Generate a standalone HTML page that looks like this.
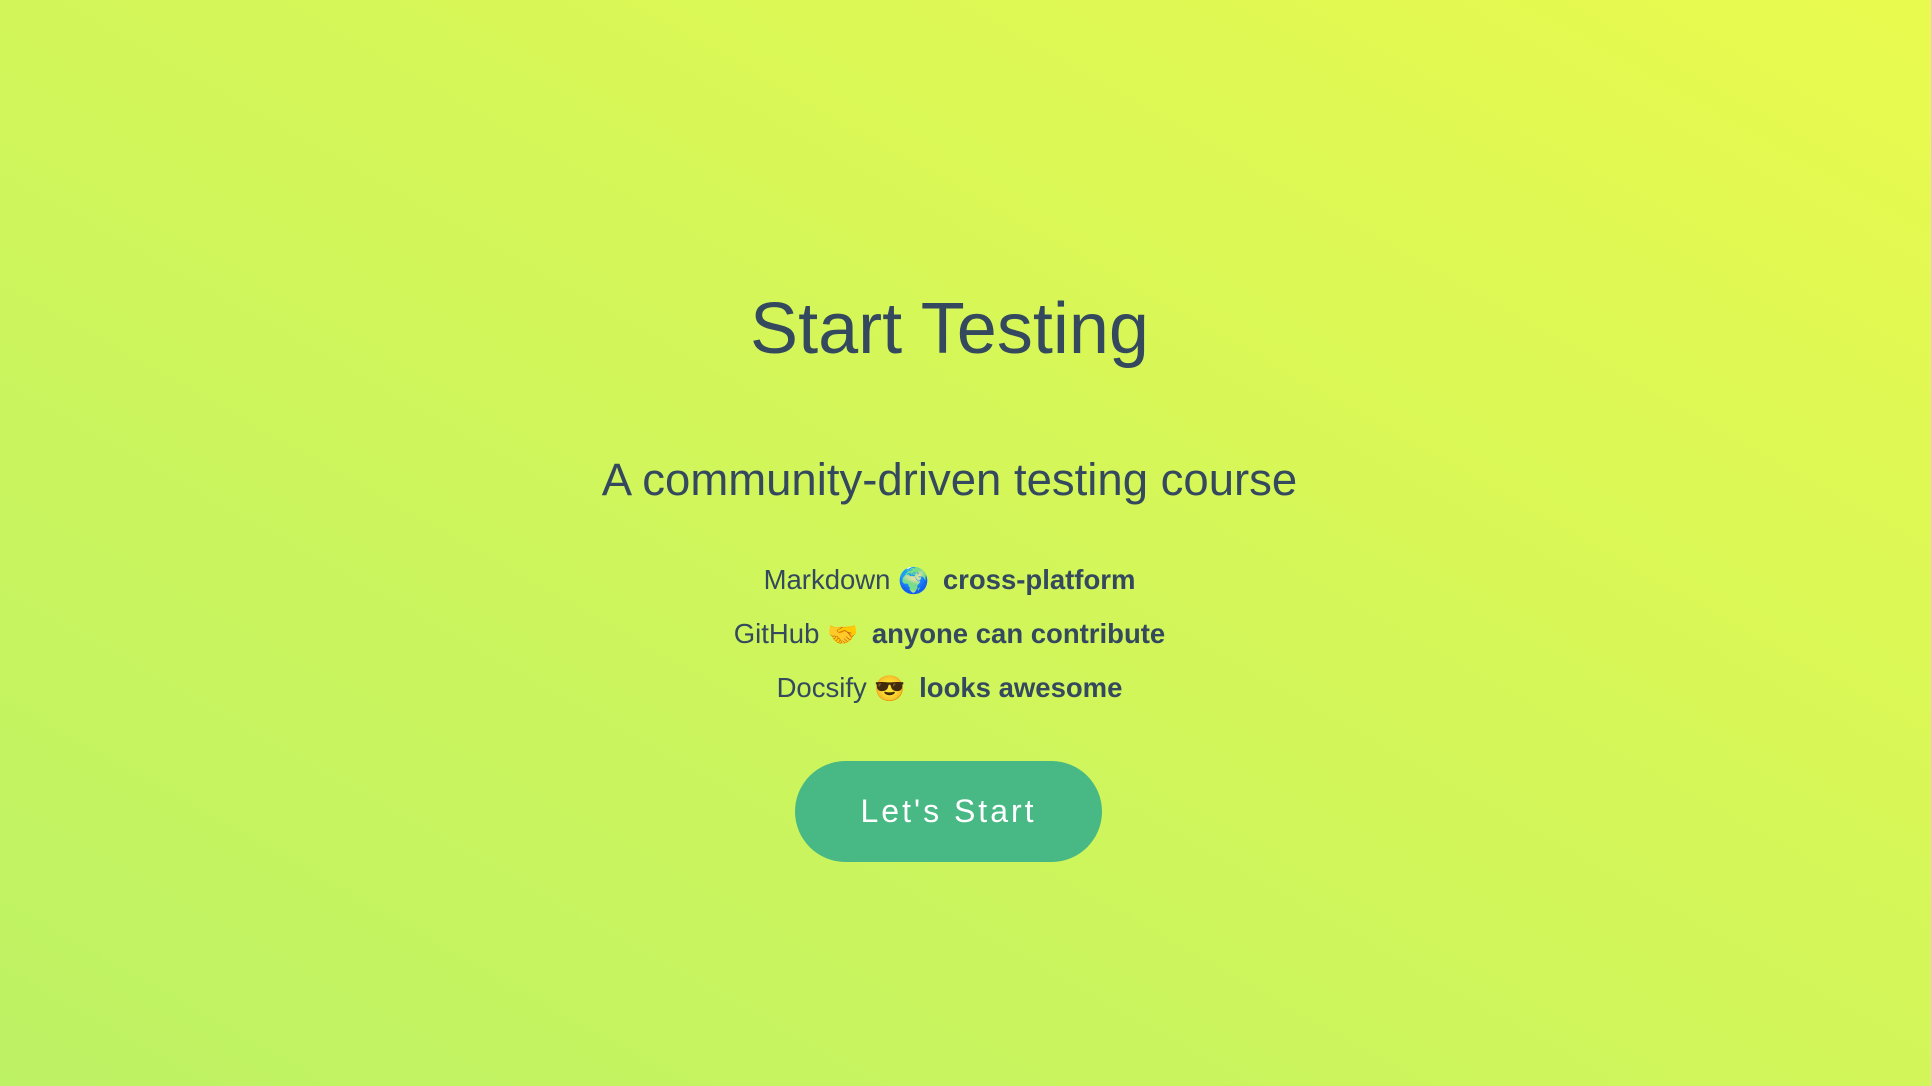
<!DOCTYPE html>
<html><head><meta charset="utf-8"><style>
html,body{margin:0;padding:0;width:1931px;height:1086px;overflow:hidden}
body{background:linear-gradient(to top right,#bdf264 0%,#d2f65a 50%,#e9fa4e 100%);font-family:"Liberation Sans",sans-serif;color:#34495e;position:relative}
.c{position:absolute;left:0;width:1899px;text-align:center}
h1{margin:0;font-weight:normal;font-size:72px;top:284px;line-height:90px}
h2{margin:0;font-weight:normal;font-size:45.5px;top:452px;line-height:56px}
.l{font-size:27.5px;line-height:40px}
.l b{font-weight:bold}
.e{font-family:"Noto Color Emoji","DejaVu Sans",sans-serif;font-size:25px;margin-right:6px}
.btn{position:absolute;left:795px;top:761px;width:307px;height:101px;border-radius:51px;background:#48b884;color:#fff;font-size:32px;letter-spacing:3px;line-height:101px;text-align:center}
</style></head><body>
<h1 class="c">Start Testing</h1>
<h2 class="c">A community-driven testing course</h2>
<div class="c l" style="top:560px">Markdown <span class="e">🌍</span> <b>cross-platform</b></div>
<div class="c l" style="top:614px">GitHub <span class="e">🤝</span> <b>anyone can contribute</b></div>
<div class="c l" style="top:668px">Docsify <span class="e">😎</span> <b>looks awesome</b></div>
<div class="btn">Let's Start</div>
</body></html>
